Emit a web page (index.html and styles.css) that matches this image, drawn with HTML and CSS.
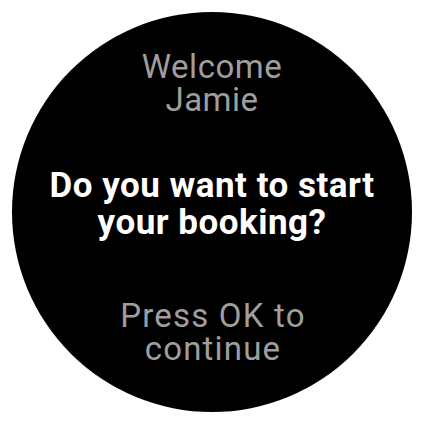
FILE: index.html
```html
<!DOCTYPE html>
<html>
<head>
<meta charset="utf-8">
<link rel="stylesheet" href="styles.css">
</head>
<body>
<div class="watch">
  <div class="greeting">Welcome<br>Jamie</div>
  <div class="question">Do you want to start<br>your booking?</div>
  <div class="hint">Press OK to<br>continue</div>
</div>
</body>
</html>
```
FILE: styles.css
```css
html, body {
  margin: 0;
  padding: 0;
  background: #ffffff;
}
body {
  padding: 12px;
  font-family: Roboto, "Noto Sans", sans-serif;
}
.watch {
  width: 400px;
  height: 400px;
  border-radius: 50%;
  background: #000000;
  display: flex;
  flex-direction: column;
  align-items: center;
  text-align: center;
  padding-top: 38px;
  box-sizing: border-box;
}
.greeting, .hint {
  color: #9e9e9e;
  font-size: 33px;
  line-height: 33px;
  letter-spacing: 0.5px;
}
.question {
  color: #ffffff;
  font-size: 35px;
  font-weight: 700;
  line-height: 37px;
  letter-spacing: 0.5px;
  margin-top: 51px;
}
.hint {
  margin-top: 58px;
  letter-spacing: 1.2px;
  padding-left: 2px;
}
```
